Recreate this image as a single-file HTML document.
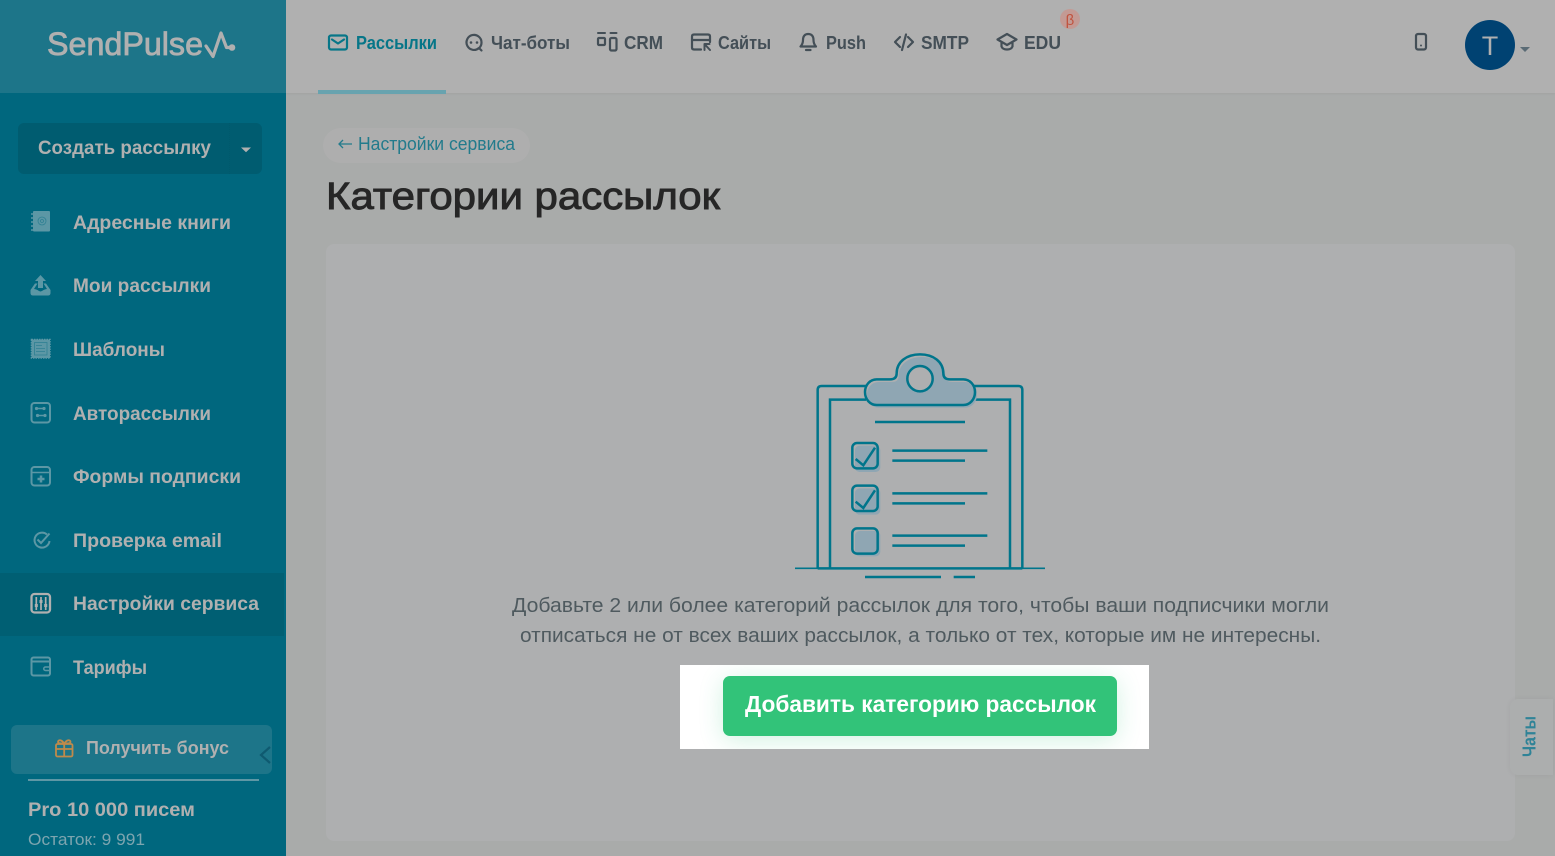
<!DOCTYPE html>
<html lang="ru">
<head>
<meta charset="utf-8">
<title>Категории рассылок</title>
<style>
html,body{margin:0;padding:0;width:1555px;height:856px;overflow:hidden;background:#a9abaa;font-family:"Liberation Sans",sans-serif}
.b{position:absolute}
svg{position:absolute;left:0;top:0}
text{font-family:"Liberation Sans","DejaVu Sans",sans-serif}
</style>
</head>
<body>
<div class="b" style="left:286px;top:0;width:1269px;height:93px;background:#b0b0b0;box-shadow:0 1px 2px rgba(0,0,0,.05)"></div>
<div class="b" style="left:0;top:0;width:286px;height:856px;background:#00677e"></div>
<div class="b" style="left:0;top:0;width:286px;height:93px;background:#1d7589"></div>
<div class="b" style="left:18px;top:123px;width:244px;height:51px;border-radius:6px;background:#005c70"></div>
<div class="b" style="left:0;top:573px;width:284px;height:63px;background:#005f73"></div>
<div class="b" style="left:11px;top:725px;width:261px;height:49px;border-radius:6px;background:#1d7589"></div>
<div class="b" style="left:28px;top:779px;width:231px;height:2px;background:#5e97a5"></div>
<div class="b" style="left:318px;top:90px;width:128px;height:4px;background:#68a3af"></div>
<div class="b" style="left:323px;top:128px;width:207px;height:35px;border-radius:18px;background:#aeaeae"></div>
<div class="b" style="left:326px;top:244px;width:1189px;height:597px;border-radius:8px;background:#aeafb0"></div>
<div class="b" style="left:680px;top:665px;width:469px;height:84px;background:#fff;overflow:hidden">
  <div class="b" style="left:43px;top:11px;width:394px;height:60px;border-radius:7px;background:#32c379;box-shadow:0 4px 24px rgba(50,195,121,.22)"></div>
</div>
<div class="b" style="left:1510px;top:699px;width:43px;height:76px;border-radius:8px 0 0 8px;background:#acaeae;box-shadow:0 0 6px rgba(0,0,0,.05)"></div>

<svg width="1555" height="856" viewBox="0 0 1555 856" xmlns="http://www.w3.org/2000/svg">
  <!-- logo -->
  <text x="47" y="55" font-size="32" fill="#b0b0b0" stroke="#b0b0b0" stroke-width=".8" textLength="156" lengthAdjust="spacingAndGlyphs">SendPulse</text>
  <path d="M206 46 L213 56.500 L221 33 L226.500 47.500 H232" fill="none" stroke="#b0b0b0" stroke-width="3.200" stroke-linejoin="round" stroke-linecap="round"/>
  <circle cx="232" cy="47.500" r="3.300" fill="#b0b0b0"/>

  <!-- create button -->
  <text x="38" y="154" font-size="19.500" font-weight="700" fill="#b0b0b0" textLength="173" lengthAdjust="spacingAndGlyphs">Создать рассылку</text>
  <path d="M241 147.500 h10 l-5 4.800z" fill="#b0b0b0"/>
  <path d="M229.500 123 V174" stroke="#00596c" stroke-width="1" stroke-dasharray="1 1"/>

  <!-- menu text -->
  <g font-size="19.500" font-weight="700" fill="#b0b0b0">
    <text x="73" y="229" textLength="158" lengthAdjust="spacingAndGlyphs">Адресные книги</text>
    <text x="73" y="292" textLength="138" lengthAdjust="spacingAndGlyphs">Мои рассылки</text>
    <text x="73" y="356" textLength="92" lengthAdjust="spacingAndGlyphs">Шаблоны</text>
    <text x="73" y="420" textLength="138" lengthAdjust="spacingAndGlyphs">Авторассылки</text>
    <text x="73" y="483" textLength="168" lengthAdjust="spacingAndGlyphs">Формы подписки</text>
    <text x="73" y="547" textLength="149" lengthAdjust="spacingAndGlyphs">Проверка email</text>
    <text x="73" y="610" textLength="186" lengthAdjust="spacingAndGlyphs">Настройки сервиса</text>
    <text x="73" y="674" textLength="74" lengthAdjust="spacingAndGlyphs">Тарифы</text>
  </g>

  <!-- menu icons -->
  <g fill="none" stroke="#5c97a5" stroke-width="2">
    <!-- book -->
    <rect x="33" y="211" width="17" height="20.500" rx="1" fill="#5c97a5" stroke="none"/>
    <path d="M31 214h3M31 218h3M31 222h3M31 226h3M31 230h3" stroke-width="1.500"/>
    <circle cx="42" cy="221" r="4" stroke="#2f8093" stroke-width=".8"/>
    <circle cx="42" cy="221" r="1.500" stroke="#2f8093" stroke-width=".8"/>
    <!-- upload tray -->
    <path d="M35 283.500 L30.500 290 V293 Q30.500 295.500 33 295.500 H48 Q50.500 295.500 50.500 293 V290 L46 283.500 H43.500 L47 289 C43 289.500 42 291.500 40.500 291.500 C39 291.500 38 289.500 34 289 L37.500 283.500Z" fill="#5c97a5" stroke="none"/>
    <path d="M40.500 275 L46 281 H43 V288 H38 V281 H35Z" fill="#5c97a5" stroke="none"/>
    <!-- stamp -->
    <rect x="31.500" y="339.500" width="18.500" height="18.500" fill="#5c97a5" stroke="#5c97a5" stroke-width="1.500" stroke-dasharray="1.500 1"/>
    <rect x="34.500" y="342.500" width="12.500" height="12.500" stroke="#2f8093" stroke-width=".8"/>
    <path d="M36 345.500h6M36 348.500h9M36 351.500h9" stroke="#2f8093" stroke-width=".8"/>
    <!-- auto -->
    <rect x="31.500" y="403" width="18.500" height="19.500" rx="3"/>
    <path d="M37 408.500h6M38 415.500h6" stroke-width="1.500"/>
    <circle cx="36.500" cy="408.500" r="1.600" fill="#5c97a5" stroke="none"/>
    <circle cx="44" cy="408.500" r="1.600" fill="#5c97a5" stroke="none"/>
    <circle cx="37.500" cy="415.500" r="1.600" fill="#5c97a5" stroke="none"/>
    <circle cx="45" cy="415.500" r="1.600" fill="#5c97a5" stroke="none"/>
    <!-- form -->
    <rect x="31.500" y="467" width="18.500" height="18.500" rx="3"/>
    <path d="M32 472.500h18" stroke-width="1.500"/>
    <path d="M41 475.500v7M37.500 479h7" stroke-width="2.500"/>
    <!-- check -->
    <path d="M47 534.500 A7.500 7.500 0 1 0 49.500 541" />
    <path d="M37.500 539.500 L41 543 L49.500 533.500" />
    <!-- settings -->
    <rect x="31.500" y="594" width="18.500" height="18.500" rx="3" stroke="#b0b0b0" stroke-width="2.300"/>
    <path d="M36.300 597v13M41 597v13M45.700 597v13" stroke="#b0b0b0" stroke-width="1.700"/>
    <rect x="34.800" y="604" width="3" height="3" fill="#b0b0b0" stroke="none"/>
    <rect x="39.500" y="600" width="3" height="3" fill="#b0b0b0" stroke="none"/>
    <rect x="44.200" y="604" width="3" height="3" fill="#b0b0b0" stroke="none"/>
    <!-- wallet -->
    <rect x="31.500" y="657.500" width="18.500" height="18" rx="2"/>
    <path d="M31 661.500h19" stroke-width="2"/>
    <path d="M50 667h-4.500a1.500 1.500 0 0 0 0 3.500H50" stroke-width="1.500"/>
  </g>

  <!-- bonus -->
  <g fill="none" stroke="#c08a4a" stroke-width="1.800">
    <rect x="56" y="744" width="16.500" height="12.500" rx="1.500"/>
    <path d="M56 749h16.500M64.200 744v12.500"/>
    <path d="M64 743.500c-2-4-6-4-6-1.500 0 1.500 3 1.500 6 1.500zM64.500 743.500c2-4 6-4 6-1.500 0 1.500-3 1.500-6 1.500z"/>
  </g>
  <text x="86" y="754" font-size="18.500" font-weight="700" fill="#b0b0b0" textLength="143" lengthAdjust="spacingAndGlyphs">Получить бонус</text>
  <path d="M270 747 L261 755 L270 763" fill="none" stroke="#0f5a70" stroke-width="2.200"/>
  <text x="28" y="816" font-size="19.500" font-weight="700" fill="#b0b0b0" textLength="167" lengthAdjust="spacingAndGlyphs">Pro 10 000 писем</text>
  <text x="28" y="845" font-size="17" fill="#7da5af" textLength="117" lengthAdjust="spacingAndGlyphs">Остаток: 9 991</text>

  <!-- top nav text -->
  <g font-size="18" font-weight="700" fill="#444f57">
    <text x="356" y="49" fill="#077688" textLength="81" lengthAdjust="spacingAndGlyphs">Рассылки</text>
    <text x="491" y="49" textLength="79" lengthAdjust="spacingAndGlyphs">Чат-боты</text>
    <text x="624" y="49" textLength="39" lengthAdjust="spacingAndGlyphs">CRM</text>
    <text x="718" y="49" textLength="53" lengthAdjust="spacingAndGlyphs">Сайты</text>
    <text x="826" y="49" textLength="40" lengthAdjust="spacingAndGlyphs">Push</text>
    <text x="921" y="49" textLength="48" lengthAdjust="spacingAndGlyphs">SMTP</text>
    <text x="1024" y="49" textLength="37" lengthAdjust="spacingAndGlyphs">EDU</text>
  </g>

  <!-- top nav icons -->
  <g fill="none" stroke="#444f57" stroke-width="2.200" stroke-linecap="round" stroke-linejoin="round">
    <rect x="329" y="35.500" width="18" height="14" rx="2" stroke="#077688"/>
    <path d="M332 39.500 L338 43.500 L344 39.500" stroke="#077688"/>
    <path d="M479 48 A7.500 7.500 0 1 1 481.500 42.500 C481.500 44.500 481 46.500 479 48 L481.500 50.500"/>
    <circle cx="471" cy="42.500" r=".8" fill="#444f57" stroke-width="1"/>
    <circle cx="477" cy="42.500" r=".8" fill="#444f57" stroke-width="1"/>
    <path d="M598 33h7M610.500 33h6" stroke-width="2"/>
    <rect x="598" y="38" width="7" height="7" rx="1"/>
    <rect x="610" y="38" width="6.500" height="12.500" rx="1.500"/>
    <path d="M701 49.500 H694 Q692 49.500 692 47.500 V36.500 Q692 34.500 694 34.500 H708 Q710 34.500 710 36.500 V42"/>
    <path d="M692 40h18"/>
    <path d="M704.500 44 V50 M704.500 44 H709.500 M704.500 44 L710 50" stroke-width="2"/>
    <path d="M800.500 46.500 H816 C814 44.500 813.500 43 813.500 40 C813.500 36 811.500 34 808.200 34 C805 34 803 36 803 40 C803 43 802.500 44.500 800.500 46.500Z"/>
    <path d="M806 50 H810.500"/>
    <path d="M900 37 L895 42 L900 47 M908 37 L913 42 L908 47 M906 34.500 L902 50"/>
    <path d="M1007 34 L1016.500 39.500 L1007 45 L997.500 39.500Z"/>
    <path d="M1001.500 43 V46.500 C1003 50.500 1011 50.500 1012.500 46.500 V43"/>
  </g>
  <circle cx="1070" cy="19" r="10" fill="#c39a94"/>
  <text x="1070" y="25" font-size="15" fill="#c0533f" text-anchor="middle">β</text>

  <!-- right top -->
  <rect x="1416" y="34" width="10" height="15.500" rx="2" fill="none" stroke="#444f57" stroke-width="2.200"/>
  <circle cx="1421" cy="45.500" r="1" fill="#444f57"/>
  <circle cx="1490" cy="45" r="25" fill="#004272"/>
  <text x="1490" y="55" font-size="27" fill="#b0b0b0" text-anchor="middle">T</text>
  <path d="M1520 47 h10 l-5 5z" fill="#5a6b75"/>

  <!-- heading -->
  <path d="M339 144 H352 M343 140 L339 144 L343 148" fill="none" stroke="#237b8c" stroke-width="1.300"/>
  <text x="358" y="150" font-size="18" fill="#237b8c" textLength="157" lengthAdjust="spacingAndGlyphs">Настройки сервиса</text>
  <text x="326" y="209" font-size="38" fill="#262626" stroke="#262626" stroke-width=".9" textLength="394" lengthAdjust="spacingAndGlyphs">Категории рассылок</text>

  <!-- illustration -->
  <g transform="translate(780 340) scale(.33333)" fill="none" stroke="#00758b" stroke-width="7.500">
    <path d="M113 685 V150 Q113 138 125 138 H258 M582 138 H715 Q727 138 727 150 V685"/>
    <path d="M150 685 V179 H258 M582 179 H690 V685"/>
    <path d="M296 126 H336 Q356 126 356 108 C356 73 386 51 426 51 C466 51 496 73 496 108 Q496 126 516 126 H556 C576 126 591 143 591 164 C591 186 576 203 556 203 H296 C276 203 261 186 261 164 C261 143 276 126 296 126 Z" fill="#8fa6b3" stroke="none"/>
    <path d="M290 118 H330 Q350 118 350 100 C350 65 380 43 420 43 C460 43 490 65 490 100 Q490 118 510 118 H550 C570 118 585 135 585 156 C585 178 570 195 550 195 H290 C270 195 255 178 255 156 C255 135 270 118 290 118 Z"/>
    <circle cx="420" cy="116" r="38" fill="#aeafb0"/>
    <path d="M285 246 H555 M337 332 H622 M337 362 H555 M337 460 H622 M337 490 H555 M337 587 H622 M337 617 H555 M255 711 H483 M521 711 H585"/>
    <path d="M113 685 H727"/>
    <path d="M45 685 H795" stroke-width="5"/>
    <g fill="#8fa6b3" stroke="none">
      <rect x="225" y="317" width="76" height="79" rx="14"/>
      <rect x="225" y="445" width="76" height="79" rx="14"/>
      <rect x="225" y="573" width="76" height="76" rx="14"/>
    </g>
    <rect x="217" y="309" width="76" height="76" rx="14"/>
    <rect x="217" y="437" width="76" height="76" rx="14"/>
    <rect x="217" y="565" width="76" height="76" rx="14"/>
    <path d="M227 357 L250 376 L285 323 M227 485 L250 504 L285 451"/>
  </g>

  <!-- copy -->
  <text x="512" y="612" font-size="20" fill="#4f5a5f" textLength="817" lengthAdjust="spacingAndGlyphs">Добавьте 2 или более категорий рассылок для того, чтобы ваши подписчики могли</text>
  <text x="520" y="642" font-size="20" fill="#4f5a5f" textLength="801" lengthAdjust="spacingAndGlyphs">отписаться не от всех ваших рассылок, а только от тех, которые им не интересны.</text>
  <text x="745" y="712" font-size="23" font-weight="700" fill="#ffffff" textLength="351" lengthAdjust="spacingAndGlyphs">Добавить категорию рассылок</text>

  <!-- chats tab -->
  <text transform="translate(1535.500 757) rotate(-90)" font-size="18" font-weight="700" fill="#2f8397" textLength="41" lengthAdjust="spacingAndGlyphs">Чаты</text>
</svg>
</body>
</html>
